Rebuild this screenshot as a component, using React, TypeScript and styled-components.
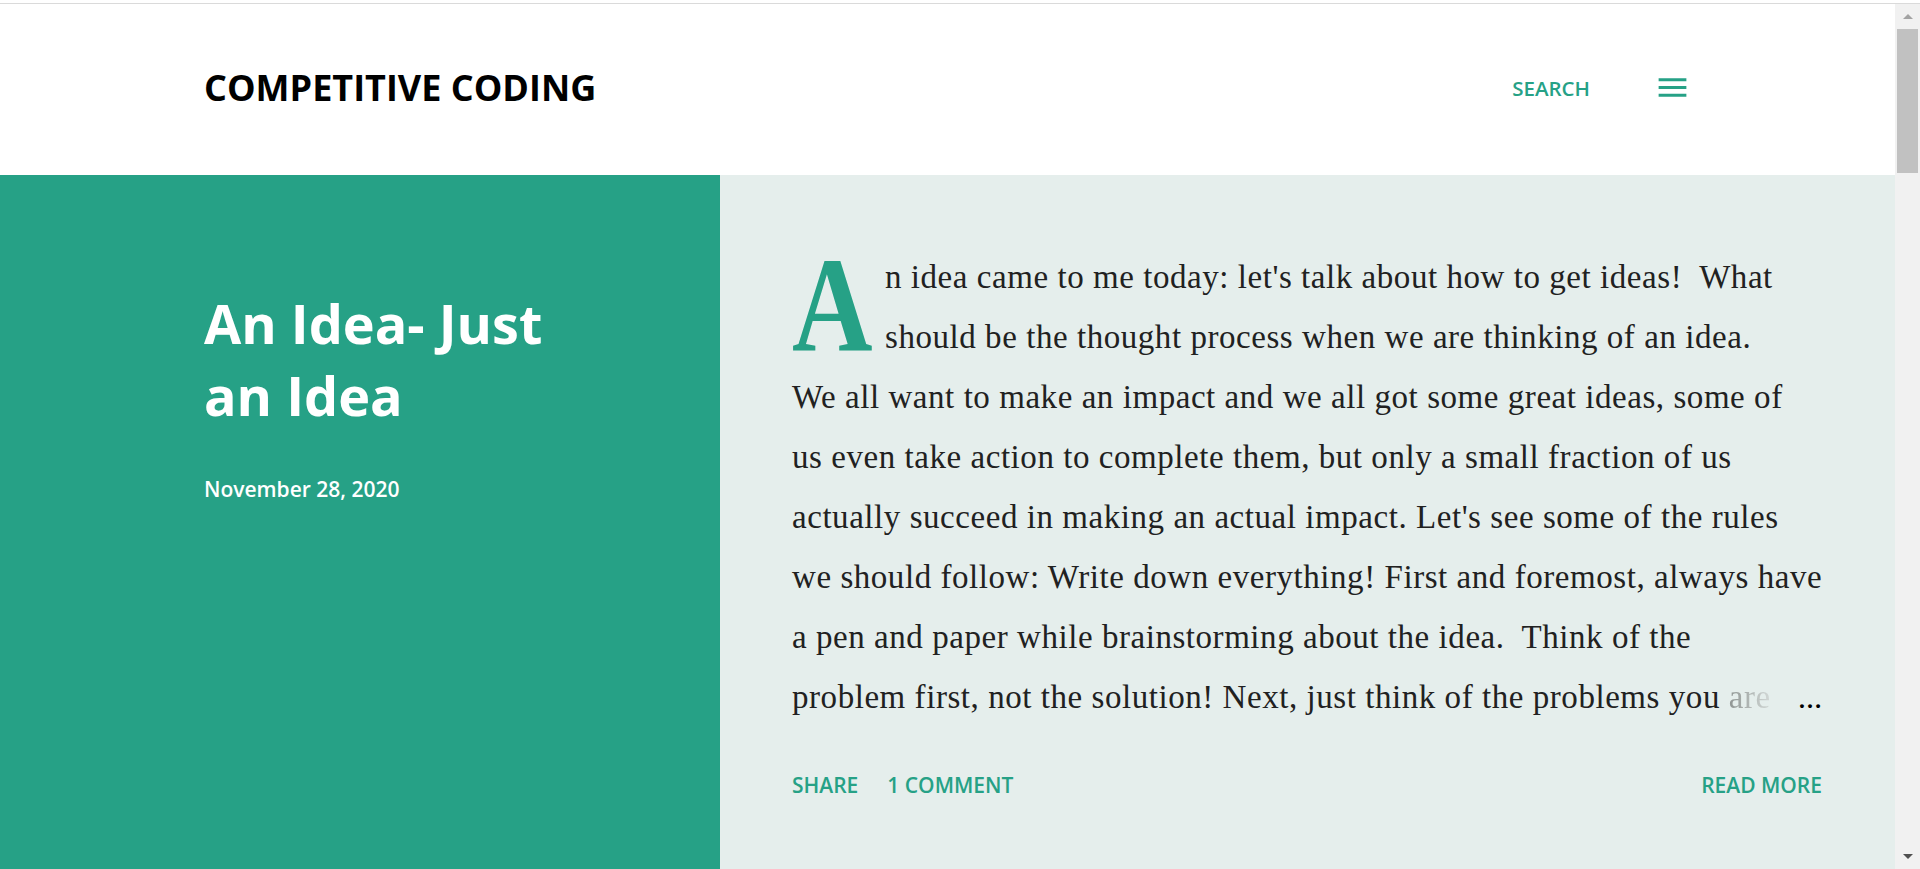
import React from "react";
import styled, { createGlobalStyle } from "styled-components";

const GREEN = "#26a186";

const GlobalStyle = createGlobalStyle`
  html, body {
    margin: 0;
    padding: 0;
    overflow: hidden;
    background: #fff;
  }
`;

const bodyLines = [
    "n idea came to me today: let's talk about how to get ideas!  What",
    "should be the thought process when we are thinking of an idea.",
    "We all want to make an impact and we all got some great ideas, some of",
    "us even take action to complete them, but only a small fraction of us",
    "actually succeed in making an actual impact. Let's see some of the rules",
    "we should follow: Write down everything! First and foremost, always have",
    "a pen and paper while brainstorming about the idea.  Think of the",
];

function MenuIcon(): React.ReactElement {
    return (
        <svg width="37" height="37" viewBox="0 0 24 24" fill={GREEN}>
            <path d="M3 18h18v-2H3v2zm0-5h18v-2H3v2zm0-7v2h18V6H3z" />
        </svg>
    );
}

function App(): React.ReactElement {
    return (
        <Frame>
            <GlobalStyle />
            <TopEdge />
            <Viewport>
                <Page>
                    <Header>
                        <BlogTitle>COMPETITIVE CODING</BlogTitle>
                        <HeaderActions>
                            <SearchButton>SEARCH</SearchButton>
                            <MenuButton>
                                <MenuIcon />
                            </MenuButton>
                        </HeaderActions>
                    </Header>
                    <Post>
                        <Aside>
                            <PostTitle>An Idea- Just an Idea</PostTitle>
                            <PostDate>November 28, 2020</PostDate>
                        </Aside>
                        <Snippet>
                            <Text>
                                <DropCap>
                                    <DropGlyph>A</DropGlyph>
                                </DropCap>
                                {bodyLines.map((line) => (
                                    <Line key={line}>{line}</Line>
                                ))}
                                <LastLine>
                                    <span>
                                        problem first, not the solution! Next, just think of the problems you{" "}
                                        <Faded>are</Faded>
                                    </span>
                                    <Ellipsis>…</Ellipsis>
                                </LastLine>
                            </Text>
                            <Actions>
                                <ActionGroup>
                                    <ActionLink>SHARE</ActionLink>
                                    <ActionLink>1 COMMENT</ActionLink>
                                </ActionGroup>
                                <ActionLink>READ MORE</ActionLink>
                            </Actions>
                        </Snippet>
                    </Post>
                </Page>
                <Scrollbar>
                    <ScrollArrow $up />
                    <ScrollThumb />
                    <ScrollTrack />
                    <ScrollArrow />
                </Scrollbar>
            </Viewport>
        </Frame>
    );
}

export default App;

const Frame = styled.div`
  display: flex;
  flex-direction: column;
  width: 1920px;
  height: 869px;
  overflow: hidden;
`;

const TopEdge = styled.div`
  height: 3px;
  background: #fff;
  border-bottom: 1px solid #dadada;
  flex-shrink: 0;
`;

const Viewport = styled.div`
  display: flex;
  flex: 1;
  min-height: 0;
`;

const Page = styled.div`
  flex: 1;
  display: flex;
  flex-direction: column;
  min-width: 0;
`;

const Header = styled.header`
  height: 171px;
  flex-shrink: 0;
  box-sizing: border-box;
  padding: 0 204px 4px 204px;
  display: flex;
  align-items: center;
  justify-content: space-between;
  background: #fff;
`;

const BlogTitle = styled.h1`
  margin: 0;
  font-family: "Open Sans", sans-serif;
  font-weight: 700;
  font-size: 36px;
  color: #000;
`;

const HeaderActions = styled.div`
  display: flex;
  align-items: center;
  gap: 64px;
`;

const SearchButton = styled.span`
  font-family: "Open Sans", sans-serif;
  font-weight: 600;
  font-size: 20.5px;
  color: ${GREEN};
`;

const MenuButton = styled.span`
  display: flex;
  width: 37px;
  height: 37px;
`;

const Post = styled.div`
  flex: 1;
  display: flex;
`;

const Aside = styled.div`
  width: 720px;
  flex-shrink: 0;
  box-sizing: border-box;
  padding: 112px 0 0 204px;
  background: ${GREEN};
  color: #fff;
`;

const PostTitle = styled.h2`
  margin: 0;
  max-width: 400px;
  font-family: "Open Sans", sans-serif;
  font-weight: 700;
  font-size: 54px;
  line-height: 72px;
`;

const PostDate = styled.div`
  margin-top: 44px;
  font-family: "Open Sans", sans-serif;
  font-weight: 600;
  font-size: 21px;
  line-height: 28px;
`;

const Snippet = styled.div`
  flex: 1;
  min-width: 0;
  box-sizing: border-box;
  padding: 72px 73px 0 72px;
  background: #e5eeec;
`;

const Text = styled.div`
  font-family: "Liberation Serif", serif;
  font-size: 33px;
  letter-spacing: 0.55px;
  line-height: 60px;
  color: #212121;
`;

const DropCap = styled.div`
  float: left;
  width: 93px;
  height: 120px;
  overflow: visible;
`;

const DropGlyph = styled.span`
  display: block;
  font-family: "Liberation Serif", serif;
  font-weight: 700;
  font-size: 136px;
  letter-spacing: 0;
  line-height: 116px;
  color: ${GREEN};
  transform: scaleX(0.82);
  transform-origin: left center;
`;

const Line = styled.span`
  display: block;
  white-space: pre;
`;

const LastLine = styled.div`
  display: flex;
  justify-content: space-between;
  align-items: baseline;
  white-space: pre;
`;

const Faded = styled.span`
  background: linear-gradient(90deg, #8f9593, #d3d9d7);
  -webkit-background-clip: text;
  background-clip: text;
  color: transparent;
`;

const Ellipsis = styled.span`
  font-size: 24px;
  font-weight: 700;
  letter-spacing: 0;
  color: #000;
`;

const Actions = styled.div`
  margin-top: 41px;
  display: flex;
  justify-content: space-between;
`;

const ActionGroup = styled.div`
  display: flex;
  gap: 29px;
`;

const ActionLink = styled.span`
  font-family: "Open Sans", sans-serif;
  font-weight: 600;
  font-size: 21px;
  line-height: 28px;
  color: ${GREEN};
`;

const Scrollbar = styled.div`
  width: 25px;
  flex-shrink: 0;
  display: flex;
  flex-direction: column;
  align-items: center;
  background: #f1f1f1;
`;

const ScrollArrow = styled.div<{ $up?: boolean }>`
  height: 25px;
  width: 100%;
  display: flex;
  align-items: center;
  justify-content: center;

  &::before {
    content: "";
    width: 0;
    height: 0;
    border-left: 5px solid transparent;
    border-right: 5px solid transparent;
    ${(p) =>
        p.$up
            ? "border-bottom: 5px solid #a3a3a3;"
            : "border-top: 5px solid #505050;"}
  }
`;

const ScrollThumb = styled.div`
  width: 21px;
  height: 144px;
  background: #c1c1c1;
`;

const ScrollTrack = styled.div`
  flex: 1;
`;
